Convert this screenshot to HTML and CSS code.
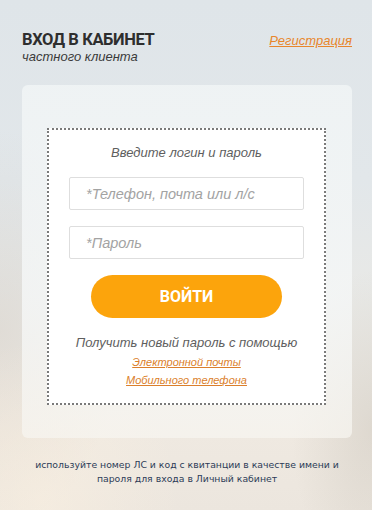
FILE: index.html
```html
<!DOCTYPE html>
<html lang="ru">
<head>
<meta charset="utf-8">
<title>Вход в кабинет</title>
<link rel="stylesheet" href="styles.css">
</head>
<body>
<div class="page">
  <header class="head">
    <div class="head-titles">
      <h1 class="title">ВХОД В КАБИНЕТ</h1>
      <div class="subtitle">частного клиента</div>
    </div>
    <a class="reg-link" href="#">Регистрация</a>
  </header>
  <main class="panel">
    <form class="box">
      <div class="prompt">Введите логин и пароль</div>
      <input class="field" type="text" placeholder="*Телефон, почта или л/с">
      <input class="field" type="password" placeholder="*Пароль">
      <button class="btn" type="button">ВОЙТИ</button>
      <div class="recover">Получить новый пароль с помощью</div>
      <a class="small-link first" href="#">Электронной почты</a>
      <a class="small-link" href="#">Мобильного телефона</a>
    </form>
  </main>
  <p class="note">используйте номер ЛС и код с квитанции в качестве имени и пароля для входа в Личный кабинет</p>
</div>
</body>
</html>
```
FILE: styles.css
```css
html, body {
  margin: 0;
  padding: 0;
}
body {
  width: 372px;
  height: 510px;
  overflow: hidden;
  font-family: "Liberation Sans", Arial, sans-serif;
  background:
    radial-gradient(ellipse 140px 160px at 40px 500px, rgba(250,240,225,0.6), rgba(250,240,225,0) 100%),
    radial-gradient(ellipse 120px 200px at 0px 330px, rgba(200,190,180,0.3), rgba(200,190,180,0) 100%),
    radial-gradient(ellipse 80px 160px at 372px 430px, rgba(190,185,175,0.35), rgba(190,185,175,0) 100%),
    linear-gradient(180deg, #dfe5e9 0%, #e2e7ea 35%, #e9e9e6 60%, #efe9e1 85%, #ece6de 100%);
}
.page {
  display: flex;
  flex-direction: column;
  padding: 30px 20px 0 22px;
}
.head {
  display: flex;
  justify-content: space-between;
  align-items: flex-start;
}
.title {
  margin: 0;
  font-family: Roboto, "Liberation Sans", sans-serif;
  font-weight: 700;
  font-size: 16.5px;
  line-height: 20px;
  color: #2e2e2e;
  letter-spacing: -0.4px;
}
.subtitle {
  font-style: italic;
  font-size: 13px;
  line-height: 14px;
  color: #3a3a3a;
}
.reg-link {
  margin-top: 3px;
  font-style: italic;
  font-size: 13px;
  line-height: 16px;
  color: #e8862c;
  text-decoration: underline;
}
.panel {
  margin-top: 21px;
  width: 330px;
  height: 353px;
  box-sizing: border-box;
  padding: 43px 26px 0 25px;
  border-radius: 6px;
  background: linear-gradient(180deg, rgba(240,244,245,0.9) 0%, rgba(245,247,247,0.82) 60%, rgba(247,245,240,0.75) 100%);
}
.box {
  margin: 0;
  box-sizing: border-box;
  width: 279px;
  height: 277px;
  border: 2px dotted #7a7a7a;
  background: #fff;
  display: flex;
  flex-direction: column;
  align-items: center;
  padding: 14px 20px 0;
}
.prompt {
  font-style: italic;
  font-size: 13px;
  line-height: 18px;
  color: #5e5e5e;
}
.field {
  box-sizing: border-box;
  width: 235px;
  height: 33px;
  flex: none;
  margin-top: 15px;
  border: 1px solid #dedede;
  border-radius: 2px;
  padding: 0 0 0 16px;
  font-family: "Liberation Sans", Arial, sans-serif;
  font-style: italic;
  font-size: 14.5px;
  color: #333;
  background: #fff;
  outline: none;
}
.field + .field {
  margin-top: 16px;
}
.field::placeholder {
  color: #a3a3a3;
}
.btn {
  margin-top: 16px;
  width: 191px;
  height: 43px;
  flex: none;
  border: none;
  border-radius: 22px;
  background: #fca40c;
  color: #fff;
  font-family: Roboto, "Liberation Sans", sans-serif;
  font-weight: 700;
  font-size: 16px;
  cursor: pointer;
}
.recover {
  margin-top: 16px;
  font-style: italic;
  font-size: 13px;
  line-height: 18px;
  white-space: nowrap;
  color: #5e5e5e;
}
.small-link {
  font-style: italic;
  font-size: 11px;
  line-height: 18px;
  color: #db7f2c;
  text-decoration: underline;
}
.small-link.first {
  margin-top: 1px;
}
.note {
  margin: 20px 0 0;
  width: 330px;
  text-align: center;
  font-family: "DejaVu Sans", Verdana, sans-serif;
  font-size: 9.3px;
  line-height: 14px;
  color: #2c3b57;
}
```
